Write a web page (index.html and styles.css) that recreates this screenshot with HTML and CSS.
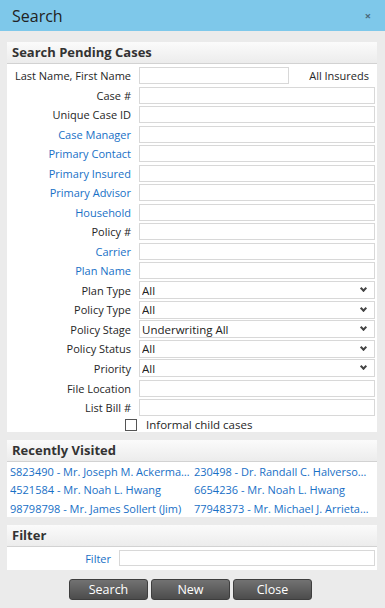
FILE: index.html
```html
<!DOCTYPE html>
<html>
<head>
<title>Search</title>
<link rel="stylesheet" href="styles.css">
</head>
<body>
<div class="titlebar">
  <span class="title">Search</span>
  <span class="close">&times;</span>
</div>

<div class="content">
  <section class="panel">
    <div class="panel-head">Search Pending Cases</div>
    <div class="panel-body form-grid">
      <label>Last Name, First Name</label>
      <div class="field-row"><input class="short" type="text"><span class="aside">All Insureds</span></div>
      <label>Case #</label><input type="text">
      <label>Unique Case ID</label><input type="text">
      <label class="link">Case Manager</label><input type="text">
      <label class="link">Primary Contact</label><input type="text">
      <label class="link">Primary Insured</label><input type="text">
      <label class="link">Primary Advisor</label><input type="text">
      <label class="link">Household</label><input type="text">
      <label>Policy #</label><input type="text">
      <label class="link">Carrier</label><input type="text">
      <label class="link">Plan Name</label><input type="text">
      <label>Plan Type</label><div class="select"><select><option>All</option></select></div>
      <label>Policy Type</label><div class="select"><select><option>All</option></select></div>
      <label>Policy Stage</label><div class="select"><select><option>Underwriting All</option></select></div>
      <label>Policy Status</label><div class="select"><select><option>All</option></select></div>
      <label>Priority</label><div class="select"><select><option>All</option></select></div>
      <label>File Location</label><input type="text">
      <label>List Bill #</label><input type="text">
      <div class="check-row"><span class="box"></span>Informal child cases</div>
    </div>
  </section>

  <section class="panel">
    <div class="panel-head">Recently Visited</div>
    <div class="panel-body recent">
      <a>S823490 - Mr. Joseph M. Ackerman Jr.</a>
      <a>230498 - Dr. Randall C. Halverson III</a>
      <a>4521584 - Mr. Noah L. Hwang</a>
      <a>6654236 - Mr. Noah L. Hwang</a>
      <a>98798798 - Mr. James Sollert (Jim)</a>
      <a>77948373 - Mr. Michael J. Arrietaga</a>
    </div>
  </section>

  <section class="panel">
    <div class="panel-head">Filter</div>
    <div class="panel-body filter-grid">
      <label class="link">Filter</label><input type="text">
    </div>
  </section>

  <div class="buttons">
    <button>Search</button>
    <button>New</button>
    <button>Close</button>
  </div>
</div>
</body>
</html>
```

FILE: styles.css
```css
body {
  margin: 0;
  font-family: "Open Sans", "DejaVu Sans", sans-serif;
  font-size: 11px;
  color: #262626;
  background-color: #ebebeb;
}

.titlebar {
  height: 31px;
  background-color: #7ec8ea;
  display: flex;
  align-items: center;
  justify-content: space-between;
  padding: 0 12px;
}

.title {
  font-size: 16px;
  color: #222;
}

.close {
  font-size: 11px;
  font-weight: bold;
  color: #4a6a7a;
  margin-right: 2px;
}

.content {
  padding: 11px 8px 0 7px;
}

.panel {
  background-color: #fff;
  margin-bottom: 8px;
}

.panel-head {
  height: 21px;
  line-height: 21px;
  padding-left: 5px;
  font-size: 13px;
  font-weight: bold;
  color: #333;
  background: linear-gradient(#fbfbfb, #ececec);
  border-bottom: 1px solid #d2d2d2;
}

.panel-body {
  padding: 2px 2px 2px 4px;
}

label {
  text-align: right;
  white-space: nowrap;
}

.link {
  color: #1870c6;
}

.form-grid {
  display: grid;
  grid-template-columns: 120px 1fr;
  grid-template-rows: repeat(18, 19.53px) 15px;
  column-gap: 8px;
  align-items: center;
  padding-bottom: 0;
}

input {
  box-sizing: border-box;
  height: 17px;
  width: 100%;
  margin: 0;
  border: 1px solid #d8d8d8;
  background-color: #fff;
  font: inherit;
  padding: 0 3px;
}

.field-row {
  display: flex;
  align-items: center;
}

.field-row .short {
  width: 150px;
}

.aside {
  margin-left: auto;
  padding-right: 6px;
}

.select {
  position: relative;
  height: 18px;
}

select {
  appearance: none;
  -webkit-appearance: none;
  box-sizing: border-box;
  width: 100%;
  height: 18px;
  margin: 0;
  border: 1px solid #d8d8d8;
  background-color: #fff;
  font-family: inherit;
  font-size: 11.5px;
  color: #222;
  padding: 0 2px;
}

.select::after {
  content: "";
  position: absolute;
  right: 9px;
  top: 5px;
  width: 3px;
  height: 3px;
  border-right: 2px solid #444;
  border-bottom: 2px solid #444;
  transform: rotate(45deg);
}

.check-row {
  grid-column: 1 / 3;
  display: flex;
  align-items: center;
  padding-left: 114px;
  height: 15px;
  font-size: 11.5px;
}

.box {
  box-sizing: border-box;
  width: 12px;
  height: 12px;
  border: 1px solid #555;
  margin-right: 9px;
}

.recent {
  display: grid;
  grid-template-columns: 184px 1fr;
  grid-auto-rows: 18.3px;
  align-items: center;
  padding: 0 4px 0 3px;
}

.recent a {
  color: #1870c6;
  white-space: nowrap;
  overflow: hidden;
  text-overflow: ellipsis;
  padding-right: 3px;
}

.filter-grid {
  display: grid;
  grid-template-columns: 100px 1fr;
  column-gap: 8px;
  align-items: center;
  padding: 3px 2px 4px 4px;
}

.filter-grid input {
  height: 16px;
}

.buttons {
  display: flex;
  justify-content: center;
  gap: 3px;
  padding: 1px 3px 0 0;
}

button {
  width: 79px;
  height: 21px;
  border: 1px solid #3e3e3e;
  border-radius: 3px;
  background: linear-gradient(#727272, #4c4c4c);
  color: #fff;
  font-family: inherit;
  font-size: 12.5px;
  padding: 0;
}
```
